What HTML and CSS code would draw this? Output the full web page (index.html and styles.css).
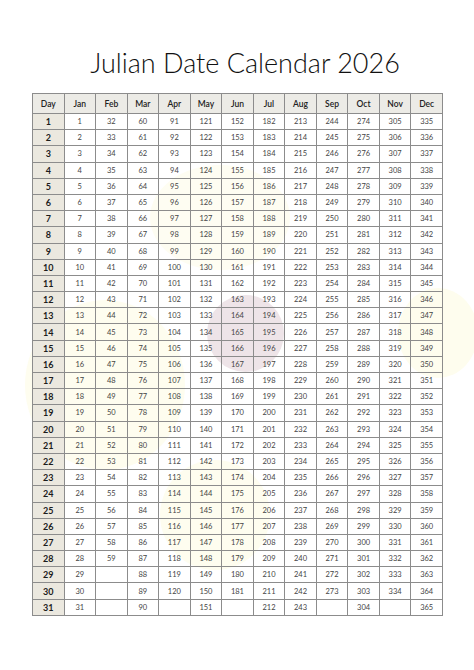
FILE: index.html
```html
<!DOCTYPE html>
<html>
<head>
<meta charset="utf-8">
<link rel="stylesheet" href="styles.css">
</head>
<body>
<div class="page">
  <div class="blob b1"></div>
  <div class="blob b2"></div>
  <div class="blob b3"></div>
  <div class="blob b4"></div>
  <div class="blob pink"></div>
  <h1 class="title">Julian Date Calendar 2026</h1>
  <table class="cal">
    <thead>
      <tr><th>Day</th><th>Jan</th><th>Feb</th><th>Mar</th><th>Apr</th><th>May</th><th>Jun</th><th>Jul</th><th>Aug</th><th>Sep</th><th>Oct</th><th>Nov</th><th>Dec</th></tr>
    </thead>
    <tbody>
      <tr><th>1</th><td>1</td><td>32</td><td>60</td><td>91</td><td>121</td><td>152</td><td>182</td><td>213</td><td>244</td><td>274</td><td>305</td><td>335</td></tr>
      <tr><th>2</th><td>2</td><td>33</td><td>61</td><td>92</td><td>122</td><td>153</td><td>183</td><td>214</td><td>245</td><td>275</td><td>306</td><td>336</td></tr>
      <tr><th>3</th><td>3</td><td>34</td><td>62</td><td>93</td><td>123</td><td>154</td><td>184</td><td>215</td><td>246</td><td>276</td><td>307</td><td>337</td></tr>
      <tr><th>4</th><td>4</td><td>35</td><td>63</td><td>94</td><td>124</td><td>155</td><td>185</td><td>216</td><td>247</td><td>277</td><td>308</td><td>338</td></tr>
      <tr><th>5</th><td>5</td><td>36</td><td>64</td><td>95</td><td>125</td><td>156</td><td>186</td><td>217</td><td>248</td><td>278</td><td>309</td><td>339</td></tr>
      <tr><th>6</th><td>6</td><td>37</td><td>65</td><td>96</td><td>126</td><td>157</td><td>187</td><td>218</td><td>249</td><td>279</td><td>310</td><td>340</td></tr>
      <tr><th>7</th><td>7</td><td>38</td><td>66</td><td>97</td><td>127</td><td>158</td><td>188</td><td>219</td><td>250</td><td>280</td><td>311</td><td>341</td></tr>
      <tr><th>8</th><td>8</td><td>39</td><td>67</td><td>98</td><td>128</td><td>159</td><td>189</td><td>220</td><td>251</td><td>281</td><td>312</td><td>342</td></tr>
      <tr><th>9</th><td>9</td><td>40</td><td>68</td><td>99</td><td>129</td><td>160</td><td>190</td><td>221</td><td>252</td><td>282</td><td>313</td><td>343</td></tr>
      <tr><th>10</th><td>10</td><td>41</td><td>69</td><td>100</td><td>130</td><td>161</td><td>191</td><td>222</td><td>253</td><td>283</td><td>314</td><td>344</td></tr>
      <tr><th>11</th><td>11</td><td>42</td><td>70</td><td>101</td><td>131</td><td>162</td><td>192</td><td>223</td><td>254</td><td>284</td><td>315</td><td>345</td></tr>
      <tr><th>12</th><td>12</td><td>43</td><td>71</td><td>102</td><td>132</td><td>163</td><td>193</td><td>224</td><td>255</td><td>285</td><td>316</td><td>346</td></tr>
      <tr><th>13</th><td>13</td><td>44</td><td>72</td><td>103</td><td>133</td><td>164</td><td>194</td><td>225</td><td>256</td><td>286</td><td>317</td><td>347</td></tr>
      <tr><th>14</th><td>14</td><td>45</td><td>73</td><td>104</td><td>134</td><td>165</td><td>195</td><td>226</td><td>257</td><td>287</td><td>318</td><td>348</td></tr>
      <tr><th>15</th><td>15</td><td>46</td><td>74</td><td>105</td><td>135</td><td>166</td><td>196</td><td>227</td><td>258</td><td>288</td><td>319</td><td>349</td></tr>
      <tr><th>16</th><td>16</td><td>47</td><td>75</td><td>106</td><td>136</td><td>167</td><td>197</td><td>228</td><td>259</td><td>289</td><td>320</td><td>350</td></tr>
      <tr><th>17</th><td>17</td><td>48</td><td>76</td><td>107</td><td>137</td><td>168</td><td>198</td><td>229</td><td>260</td><td>290</td><td>321</td><td>351</td></tr>
      <tr><th>18</th><td>18</td><td>49</td><td>77</td><td>108</td><td>138</td><td>169</td><td>199</td><td>230</td><td>261</td><td>291</td><td>322</td><td>352</td></tr>
      <tr><th>19</th><td>19</td><td>50</td><td>78</td><td>109</td><td>139</td><td>170</td><td>200</td><td>231</td><td>262</td><td>292</td><td>323</td><td>353</td></tr>
      <tr><th>20</th><td>20</td><td>51</td><td>79</td><td>110</td><td>140</td><td>171</td><td>201</td><td>232</td><td>263</td><td>293</td><td>324</td><td>354</td></tr>
      <tr><th>21</th><td>21</td><td>52</td><td>80</td><td>111</td><td>141</td><td>172</td><td>202</td><td>233</td><td>264</td><td>294</td><td>325</td><td>355</td></tr>
      <tr><th>22</th><td>22</td><td>53</td><td>81</td><td>112</td><td>142</td><td>173</td><td>203</td><td>234</td><td>265</td><td>295</td><td>326</td><td>356</td></tr>
      <tr><th>23</th><td>23</td><td>54</td><td>82</td><td>113</td><td>143</td><td>174</td><td>204</td><td>235</td><td>266</td><td>296</td><td>327</td><td>357</td></tr>
      <tr><th>24</th><td>24</td><td>55</td><td>83</td><td>114</td><td>144</td><td>175</td><td>205</td><td>236</td><td>267</td><td>297</td><td>328</td><td>358</td></tr>
      <tr><th>25</th><td>25</td><td>56</td><td>84</td><td>115</td><td>145</td><td>176</td><td>206</td><td>237</td><td>268</td><td>298</td><td>329</td><td>359</td></tr>
      <tr><th>26</th><td>26</td><td>57</td><td>85</td><td>116</td><td>146</td><td>177</td><td>207</td><td>238</td><td>269</td><td>299</td><td>330</td><td>360</td></tr>
      <tr><th>27</th><td>27</td><td>58</td><td>86</td><td>117</td><td>147</td><td>178</td><td>208</td><td>239</td><td>270</td><td>300</td><td>331</td><td>361</td></tr>
      <tr><th>28</th><td>28</td><td>59</td><td>87</td><td>118</td><td>148</td><td>179</td><td>209</td><td>240</td><td>271</td><td>301</td><td>332</td><td>362</td></tr>
      <tr><th>29</th><td>29</td><td></td><td>88</td><td>119</td><td>149</td><td>180</td><td>210</td><td>241</td><td>272</td><td>302</td><td>333</td><td>363</td></tr>
      <tr><th>30</th><td>30</td><td></td><td>89</td><td>120</td><td>150</td><td>181</td><td>211</td><td>242</td><td>273</td><td>303</td><td>334</td><td>364</td></tr>
      <tr><th>31</th><td>31</td><td></td><td>90</td><td></td><td>151</td><td></td><td>212</td><td>243</td><td></td><td>304</td><td></td><td>365</td></tr>
    </tbody>
  </table>
</div>
</body>
</html>
```
FILE: styles.css
```css
html, body {
  margin: 0;
  padding: 0;
  background: #ffffff;
}
.page {
  position: relative;
  width: 474px;
  height: 670px;
  overflow: hidden;
}
.blob {
  position: absolute;
  border-radius: 50%;
  z-index: 0;
}
.b1 {
  left: 25px; top: 300px; width: 160px; height: 170px;
  background: #fefdef;
}
.b2 {
  left: 398px; top: 288px; width: 80px; height: 90px;
  background: #fefdee;
}
.b3 {
  left: 150px; top: 165px; width: 140px; height: 105px;
  background: #fefdf2;
}
.b4 {
  left: 160px; top: 460px; width: 110px; height: 110px;
  background: #fefdef;
}
.pink {
  left: 207px; top: 295px; width: 77px; height: 77px;
  background: #eee4e8;
}
.title {
  position: relative;
  z-index: 1;
  margin: 0;
  height: 93px;
  box-sizing: border-box;
  padding: 47px 0 0 16px;
  text-align: center;
  font-family: "Lato", "DejaVu Sans", sans-serif;
  font-weight: 300;
  font-size: 27px;
  line-height: 32px;
  color: #111111;
}
.cal {
  position: relative;
  z-index: 1;
  margin-left: 32px;
  width: 411px;
  border-collapse: collapse;
  table-layout: fixed;
  font-family: "Lato", "Open Sans", sans-serif;
  color: #333333;
}
.cal th, .cal td {
  border: 1px solid #8c8c8c;
  padding: 0;
  text-align: center;
  vertical-align: middle;
}
.cal thead th {
  height: 19px;
  background: #ecebe6;
  font-size: 8.5px;
  font-weight: 600;
  color: #222222;
}
.cal tbody tr {
  height: 16.2px;
}
.cal tbody th {
  background: #ebe8df;
  font-size: 9px;
  font-weight: 700;
  color: #1c1c1c;
}
.cal td {
  font-size: 7.5px;
  color: #444444;
}
```
